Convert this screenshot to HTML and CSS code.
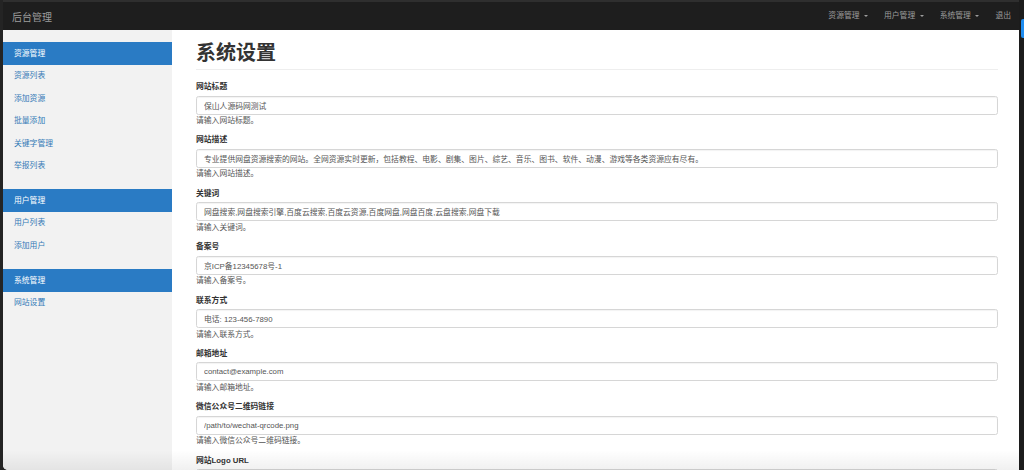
FILE: index.html
```html
<!DOCTYPE html>
<html lang="zh-CN">
<head>
    <meta charset="UTF-8">
    <meta name="viewport" content="width=device-width, initial-scale=1.0">
    <title>系统设置 - 后台管理</title>
    <link rel="stylesheet" href="styles.css">
</head>
<body>

    <div class="screen">
        <div class="app">
            <nav class="navbar">
                <a class="brand" href="#">后台管理</a>
                <ul class="nav-right">
                    <li><a href="#">资源管理<span class="caret"></span></a></li>
                    <li><a href="#">用户管理<span class="caret"></span></a></li>
                    <li><a href="#">系统管理<span class="caret"></span></a></li>
                    <li><a href="#">退出</a></li>
                </ul>
            </nav>

            <div class="layout">
                <aside class="sidebar">
                    <ul class="side-group">
                        <li class="side-title">资源管理</li>
                        <li><a href="#">资源列表</a></li>
                        <li><a href="#">添加资源</a></li>
                        <li><a href="#">批量添加</a></li>
                        <li><a href="#">关键字管理</a></li>
                        <li><a href="#">举报列表</a></li>
                    </ul>
                    <ul class="side-group">
                        <li class="side-title">用户管理</li>
                        <li><a href="#">用户列表</a></li>
                        <li><a href="#">添加用户</a></li>
                    </ul>
                    <ul class="side-group">
                        <li class="side-title">系统管理</li>
                        <li><a href="#">网站设置</a></li>
                    </ul>
                </aside>

                <main class="main">
                    <h1 class="page-header">系统设置</h1>

                    <form class="settings">
                        <div class="form-group">
                            <label for="siteTitle">网站标题</label>
                            <input type="text" id="siteTitle" value="保山人源码网测试">
                            <p class="help">请输入网站标题。</p>
                        </div>
                        <div class="form-group">
                            <label for="siteDesc">网站描述</label>
                            <input type="text" id="siteDesc" value="专业提供网盘资源搜索的网站。全网资源实时更新，包括教程、电影、剧集、图片、综艺、音乐、图书、软件、动漫、游戏等各类资源应有尽有。">
                            <p class="help">请输入网站描述。</p>
                        </div>
                        <div class="form-group">
                            <label for="keywords">关键词</label>
                            <input type="text" id="keywords" value="网盘搜索,网盘搜索引擎,百度云搜索,百度云资源,百度网盘,网盘百度,云盘搜索,网盘下载">
                            <p class="help">请输入关键词。</p>
                        </div>
                        <div class="form-group">
                            <label for="icp">备案号</label>
                            <input type="text" id="icp" value="京ICP备12345678号-1">
                            <p class="help">请输入备案号。</p>
                        </div>
                        <div class="form-group">
                            <label for="contact">联系方式</label>
                            <input type="text" id="contact" value="电话: 123-456-7890">
                            <p class="help">请输入联系方式。</p>
                        </div>
                        <div class="form-group">
                            <label for="email">邮箱地址</label>
                            <input type="text" id="email" value="contact@example.com">
                            <p class="help">请输入邮箱地址。</p>
                        </div>
                        <div class="form-group">
                            <label for="wechat">微信公众号二维码链接</label>
                            <input type="text" id="wechat" value="/path/to/wechat-qrcode.png">
                            <p class="help">请输入微信公众号二维码链接。</p>
                        </div>
                        <div class="form-group">
                            <label for="logo">网站Logo URL</label>
                            <input type="text" id="logo">
                        </div>
                    </form>
                </main>
            </div>
        </div>

        <div class="scroll-track">
            <div class="scroll-thumb"></div>
        </div>
    </div>

</body>
</html>
```

FILE: styles.css
```css
* {
    box-sizing: border-box;
}
body {
    margin: 0;
    background-color: #242424;
    font-family: "Liberation Sans", "Noto Sans CJK SC", sans-serif;
    font-size: 7.8px;
    color: #333;
}
a {
    text-decoration: none;
}
ul {
    list-style: none;
    margin: 0;
    padding: 0;
}

.screen {
    display: flex;
    height: 470px;
    overflow: hidden;
}
.app {
    position: relative;
    flex: 1;
    margin-left: 3px;
    height: 470px;
    overflow: hidden;
    background-color: #fff;
    border-bottom-left-radius: 5px;
}
.app::after {
    content: "";
    position: absolute;
    left: 0;
    right: 0;
    bottom: 0;
    height: 20px;
    background: linear-gradient(to bottom, rgba(0, 0, 0, 0), rgba(0, 0, 0, 0.06));
    pointer-events: none;
}
.scroll-track {
    width: 5px;
    background-color: #1c1c1c;
    padding-top: 19px;
}
.scroll-thumb {
    margin-left: 1.5px;
    height: 19px;
    background-color: #1d8cf0;
    border-radius: 2px 0 0 2px;
}

/* top bar */
.navbar {
    display: flex;
    justify-content: space-between;
    align-items: center;
    height: 30px;
    background-color: #1e1e1e;
    border-top: 2px solid #2f2f2f;
}
.brand {
    padding-left: 9px;
    font-size: 10px;
    color: #9d9d9d;
}
.nav-right {
    display: flex;
}
.nav-right a {
    display: flex;
    align-items: center;
    padding: 0 8px;
    color: #9d9d9d;
    font-size: 7.8px;
    line-height: 28px;
}
.caret {
    display: inline-block;
    margin-left: 4.5px;
    border-top: 2.5px solid #9d9d9d;
    border-left: 2.5px solid transparent;
    border-right: 2.5px solid transparent;
}

/* columns */
.layout {
    display: flex;
    height: 440px;
}
.sidebar {
    width: 169px;
    flex-shrink: 0;
    background-color: #f2f2f2;
    padding-top: 12px;
}
.side-group {
    margin-bottom: 11.5px;
}
.side-group li {
    line-height: 22.5px;
    font-size: 7.8px;
}
.side-group a {
    display: block;
    padding-left: 11px;
    color: #337ab7;
}
.side-group .side-title {
    line-height: 23px;
    padding-left: 11px;
    background-color: #2a7bc4;
    color: #fff;
}

.main {
    flex: 1;
    padding: 12px 21px 0 24px;
}
.page-header {
    margin: 0 0 11px;
    padding-bottom: 5px;
    border-bottom: 1px solid #eee;
    font-size: 20px;
    line-height: 22px;
    font-weight: bold;
    color: #333;
}

.form-group {
    margin-bottom: 8.4px;
}
.form-group label {
    display: block;
    margin-bottom: 3.5px;
    font-weight: bold;
    font-size: 7.8px;
    line-height: 11px;
    color: #333;
}
.form-group input {
    display: block;
    width: 100%;
    height: 19px;
    padding: 0 7px;
    border: 1px solid #d6d6d6;
    border-radius: 2.5px;
    box-shadow: inset 0 1px 1px rgba(0, 0, 0, 0.05);
    font-family: "Liberation Sans", "Noto Sans CJK SC", sans-serif;
    font-size: 7.8px;
    color: #555;
}
.help {
    margin: 0.5px 0 0;
    line-height: 11px;
    color: #555;
}
```
